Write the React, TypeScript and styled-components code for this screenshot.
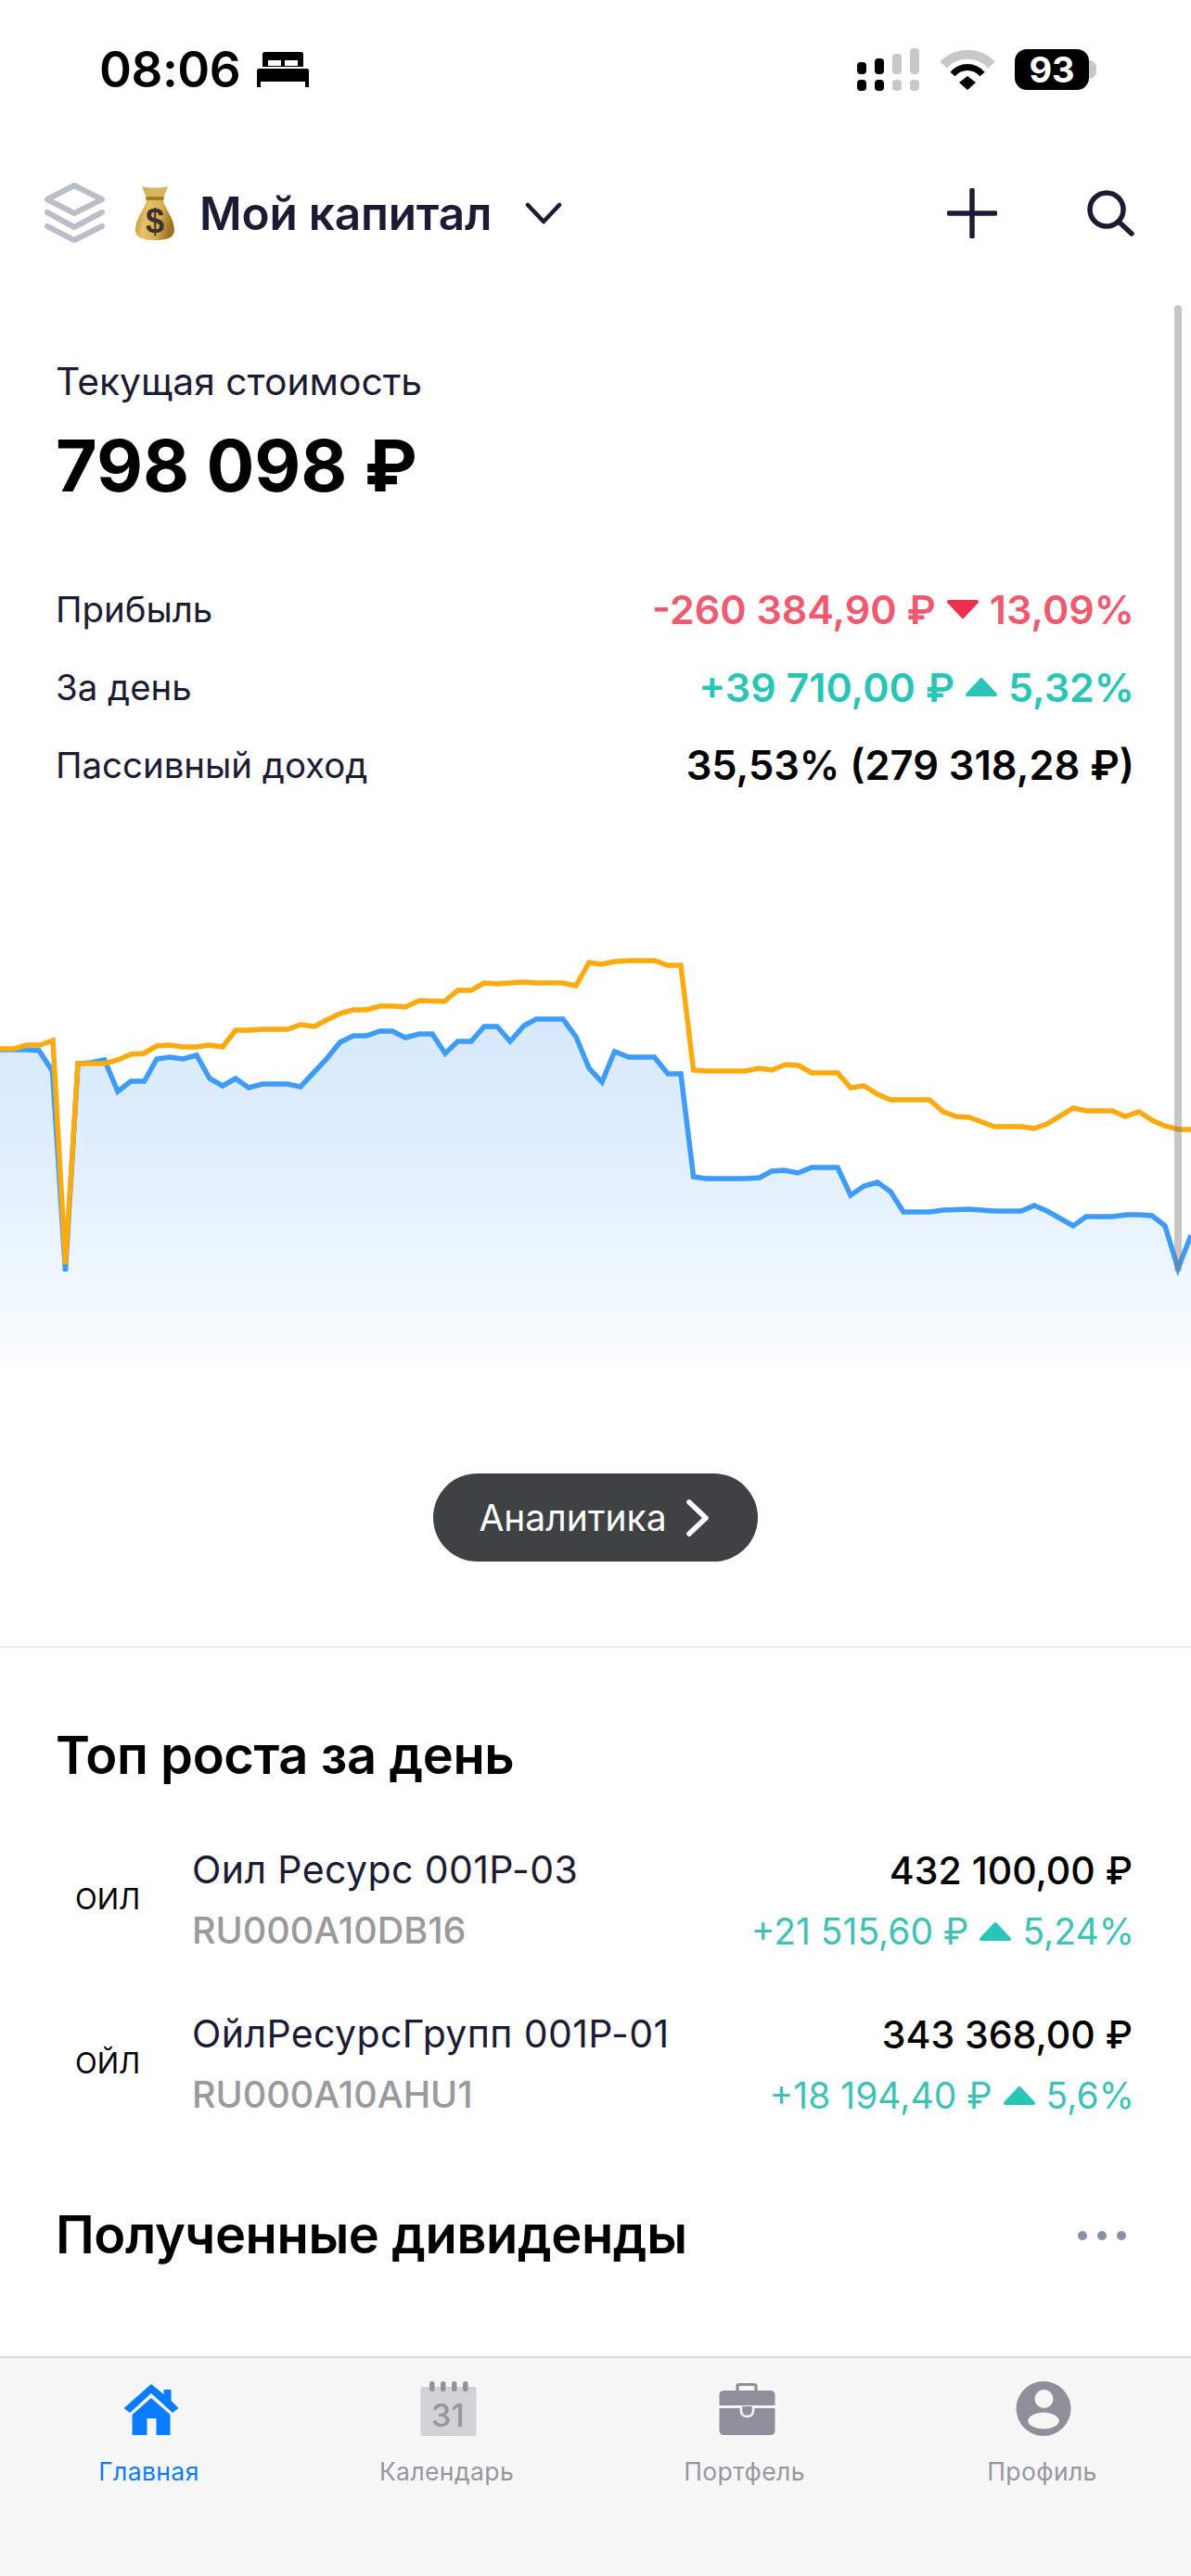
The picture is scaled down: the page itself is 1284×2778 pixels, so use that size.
import React from 'react'
import styled, { createGlobalStyle } from 'styled-components'

const GlobalStyle = createGlobalStyle`
	html, body {
		margin: 0;
		padding: 0;
		background: #fff;
		overflow: hidden;
	}
	* {
		box-sizing: border-box;
	}
`

const Page = styled.div`
	position: relative;
	width: 1284px;
	height: 2778px;
	display: flex;
	flex-direction: column;
	overflow: hidden;
	background: #fff;
	font-family: Inter, "Noto Sans", sans-serif;
	color: #1b1c33;
`

const StatusBar = styled.div`
	height: 150px;
	flex-shrink: 0;
	display: flex;
	align-items: center;
	justify-content: space-between;
	padding: 0 97px 0 107px;
`

const StatusLeft = styled.div`
	display: flex;
	align-items: center;
	gap: 18px;
`

const StatusRight = styled.div`
	display: flex;
	align-items: center;
	gap: 21px;
`

const Time = styled.div`
	font-size: 53px;
	font-weight: 600;
	line-height: 60px;
	color: #000;
	letter-spacing: -0.5px;
`

const Battery = styled.div`
	position: relative;
	width: 80px;
	height: 44px;
	margin-right: 13px;
	border-radius: 13px;
	background: #000;
	color: #fff;
	font-size: 38px;
	font-weight: 700;
	line-height: 44px;
	text-align: center;

	&::after {
		content: '';
		position: absolute;
		left: 80px;
		top: 12px;
		width: 8px;
		height: 20px;
		border-radius: 0 10px 10px 0;
		background: #c8c8c8;
	}
`

const Header = styled.div`
	height: 160px;
	flex-shrink: 0;
	display: flex;
	align-items: center;
	padding: 0 61px 0 48px;
`

const Title = styled.div`
	margin-left: 26px;
	font-size: 49.5px;
	font-weight: 600;
	line-height: 60px;
	letter-spacing: -0.2px;
`

const HeaderActions = styled.div`
	margin-left: auto;
	display: flex;
	align-items: center;
	gap: 96px;
`

const Summary = styled.div`
	padding: 77px 63px 0 60px;
`

const SummaryLabel = styled.div`
	font-size: 40.8px;
	line-height: 48px;
	font-weight: 400;
`

const SummaryValue = styled.div`
	font-size: 77px;
	line-height: 90px;
	font-weight: 700;
	color: #000;
	margin: 22px 0 68px;
`

const StatRow = styled.div`
	height: 84px;
	display: flex;
	align-items: center;
	justify-content: space-between;
`

const StatLabel = styled.div`
	font-size: 38.4px;
	font-weight: 400;
`

const Change = styled.div<{ $color: string; $size: number; $weight: number }>`
	display: flex;
	align-items: center;
	gap: 10px;
	margin-right: -2px;
	font-size: ${p => p.$size}px;
	font-weight: ${p => p.$weight};
	color: ${p => p.$color};
	white-space: nowrap;
`

const Chart = styled.svg`
	display: block;
	flex-shrink: 0;
	width: 1284px;
	height: 722px;
`

const Scrollbar = styled.div`
	position: absolute;
	left: 1266px;
	top: 329px;
	width: 8px;
	height: 1042px;
	border-radius: 4px 4px 0 0;
	background: rgba(120, 120, 120, 0.42);
`

const AnalyticsButton = styled.button`
	align-self: center;
	flex-shrink: 0;
	width: 350px;
	height: 95px;
	border: 0;
	border-radius: 48px;
	background: #3e4245;
	color: #fff;
	font-family: inherit;
	font-size: 39px;
	font-weight: 400;
	display: flex;
	align-items: center;
	justify-content: center;
	gap: 20px;
	padding: 0 3px 0 0;
`

const Divider = styled.div`
	flex-shrink: 0;
	height: 2px;
	margin-top: 91px;
	background: #ececee;
`

const SectionTitle = styled.div`
	font-size: 56px;
	font-weight: 600;
	color: #000;
	line-height: 70px;
	letter-spacing: -0.4px;
`

const TopSection = styled.div`
	padding: 81px 63px 0 60px;
`

const AssetList = styled.div`
	margin-top: 32px;
`

const AssetRow = styled.div`
	height: 177px;
	display: flex;
	align-items: center;
`

const Ticker = styled.div`
	width: 147px;
	padding-left: 21px;
	margin-top: -2px;
	flex-shrink: 0;
	font-size: 31px;
	line-height: 40px;
	color: #000;
`

const AssetInfo = styled.div`
	display: flex;
	flex-direction: column;
	gap: 26px;
`

const AssetName = styled.div`
	font-size: 41px;
	line-height: 40px;
	letter-spacing: 0.4px;
`

const AssetCode = styled.div`
	font-size: 39.5px;
	line-height: 40px;
	font-weight: 500;
	color: #999a9e;
`

const AssetValues = styled.div`
	margin-left: auto;
	padding-top: 6px;
	display: flex;
	flex-direction: column;
	align-items: flex-end;
	gap: 22px;
`

const AssetPrice = styled.div`
	font-size: 41px;
	line-height: 40px;
	font-weight: 500;
	color: #000;
`

const DividendsHeader = styled.div`
	margin: 58px 70px 0 60px;
	display: flex;
	align-items: center;
	justify-content: space-between;
`

const DividendsTitle = styled(SectionTitle)`
	line-height: 76px;
`

const MoreDots = styled.svg`
	display: block;
	width: 52px;
	height: 12px;
	margin-top: 2px;
`

const TabBar = styled.div`
	margin-top: auto;
	height: 237px;
	flex-shrink: 0;
	display: grid;
	grid-template-columns: repeat(4, 1fr);
	background: #f7f7f8;
	border-top: 2px solid #d9d9dd;
	padding-top: 25px;
`

const Tab = styled.div<{ $active?: boolean }>`
	display: flex;
	flex-direction: column;
	align-items: center;
	gap: 16px;
	font-size: 26.5px;
	line-height: 34px;
	letter-spacing: 0.4px;
	color: ${p => (p.$active ? '#0a7cff' : '#96979c')};
`

const TabIcon = styled.svg`
	display: block;
	width: 64px;
	height: 64px;
	overflow: visible;
`

const orange: [number, number][] = [
	[0, 1131], [15.5, 1131], [28.7, 1127], [43, 1127], [57, 1122], [70.5, 1363], [84, 1147], [112.6, 1147],
	[127, 1143], [141, 1137], [155, 1136], [169, 1128], [183, 1127], [197, 1129], [212, 1129], [225, 1127],
	[240, 1129], [254, 1111], [268, 1111], [283, 1110], [310, 1110], [324, 1105], [339, 1107], [352, 1100],
	[366.5, 1093], [381, 1089], [395, 1089], [409.5, 1085], [424, 1085], [437, 1086], [452, 1079], [479, 1080],
	[493.5, 1068], [508, 1068], [522, 1060], [536, 1061], [564, 1059], [578, 1060], [606, 1060], [621, 1063],
	[635, 1038], [648, 1040], [662.5, 1037], [679, 1036], [705.5, 1036], [720, 1041], [734, 1041], [747.6, 1154],
	[761, 1155], [804, 1155], [818, 1152], [832, 1154], [847, 1148], [861, 1149], [875, 1157], [903, 1157],
	[917, 1173], [931.5, 1171], [946, 1180], [960, 1186], [1002, 1186], [1017, 1199], [1031, 1204], [1045, 1205],
	[1072, 1215], [1101, 1215], [1115, 1217], [1129, 1212], [1157, 1195], [1172, 1198], [1199, 1198], [1213, 1204],
	[1228, 1199], [1242, 1208], [1255, 1214], [1270, 1218], [1284, 1218],
]

const blue: [number, number][] = [
	[0, 1132], [28.7, 1132], [42, 1133], [56.5, 1155], [70.5, 1371], [84, 1147], [98, 1146], [112.6, 1143],
	[127, 1177], [141, 1166], [155.6, 1166], [169, 1142], [183, 1140], [197, 1142], [212, 1138], [226, 1163],
	[240, 1171], [254, 1163], [268, 1173], [283, 1169], [310, 1169], [324, 1172], [352, 1142], [366.5, 1124],
	[381, 1117], [395, 1117], [409.5, 1112], [423, 1112], [437, 1119], [452, 1115], [466, 1115], [480, 1136],
	[493.5, 1123], [508, 1123], [522, 1107], [536, 1107], [550, 1123], [565, 1106], [578, 1099], [607, 1099],
	[621, 1118], [635, 1152], [649, 1167], [662.5, 1134], [678, 1140], [705.5, 1140], [720, 1158], [734, 1158],
	[747.6, 1269], [761, 1271], [804, 1271], [819, 1270], [832, 1263], [845.5, 1262], [860, 1265], [875, 1259],
	[903, 1259], [917, 1289], [931.5, 1279], [946, 1275], [960, 1285], [974, 1307], [1002, 1307], [1017, 1305],
	[1045, 1304], [1072, 1306], [1101, 1306], [1115, 1300], [1129, 1306], [1157, 1322], [1171, 1312], [1199, 1312],
	[1215, 1310], [1228, 1310], [1242, 1311], [1256, 1322], [1270, 1368], [1284, 1332],
]

const toPoints = (pts: [number, number][]) => pts.map(p => p.join(',')).join(' ')

function Triangle({ down, color }: { down?: boolean; color: string }) {
	const d = down ? '4,4 34,4 19,20' : '19,4 34,20 4,20'
	return (
		<svg width="38" height="24" viewBox="0 0 38 24">
			<polygon points={d} fill={color} stroke={color} strokeWidth="4" strokeLinejoin="round" />
		</svg>
	)
}

function MoneyBag() {
	return (
		<svg width="44" height="60" viewBox="0 0 44 60" style={{ marginLeft: 29 }}>
			<defs>
				<linearGradient id="bagBody" x1="0" x2="1" y1="0" y2="0.25">
					<stop offset="0" stopColor="#a9802c" />
					<stop offset="0.35" stopColor="#e6c269" />
					<stop offset="0.7" stopColor="#d7ad50" />
					<stop offset="1" stopColor="#9c7424" />
				</linearGradient>
			</defs>
			<path d="M8 1 C16 3 28 3 36 1 L31 14 L13 14 Z" fill="#d9b45f" />
			<path d="M13 14 C14 22 1 34 1 48 C1 56 8 59 22 59 C36 59 43 56 43 48 C43 34 30 22 31 14 Z" fill="url(#bagBody)" />
			<rect x="12" y="12" width="20" height="4" rx="2" fill="#a57b2a" />
			<text x="22" y="51" textAnchor="middle" fontFamily="Liberation Sans" fontSize="36" fontWeight="700" fill="#3b3230">$</text>
		</svg>
	)
}

export default function App() {
	const area = `0,1540 ${toPoints(blue)} 1284,1540`

	return (
		<Page>
			<GlobalStyle />
			<StatusBar>
				<StatusLeft>
					<Time>08:06</Time>
					<svg width="56" height="38" viewBox="0 0 56 38">
						<path d="M6 2 Q6 0 9 0 L47 0 Q50 0 50 2 L50 16 L6 16 Z M12 9 L12 15 L26 15 L26 9 Z M30 9 L30 15 L44 15 L44 9 Z" fill="#000" fillRule="evenodd" />
						<path d="M2 18 L54 18 Q56 18 56 20 L56 38 L52 38 L52 32 L4 32 L4 38 L0 38 L0 20 Q0 18 2 18 Z" fill="#000" />
					</svg>
				</StatusLeft>
				<StatusRight>
					<svg width="68" height="46" viewBox="0 0 68 46">
						<rect x="0" y="15" width="10" height="13" rx="4" fill="#000" />
						<rect x="19" y="11" width="10" height="17" rx="4" fill="#000" />
						<rect x="38" y="6" width="10" height="22" rx="4" fill="#c8c8c8" />
						<rect x="57" y="0" width="10" height="28" rx="4" fill="#c8c8c8" />
						<rect x="0" y="34" width="10" height="12" rx="4" fill="#000" />
						<rect x="19" y="34" width="10" height="12" rx="4" fill="#000" />
						<rect x="38" y="34" width="10" height="12" rx="4" fill="#c8c8c8" />
						<rect x="57" y="34" width="10" height="12" rx="4" fill="#c8c8c8" />
					</svg>
					<svg width="60" height="44" viewBox="0 0 60 44">
						<path d="M4 17 C18 2 42 2 56 17" fill="none" stroke="#c8c8c8" strokeWidth="10" />
						<path d="M14 27 C23 17 37 17 46 27" fill="none" stroke="#000" strokeWidth="7" />
						<path d="M30 29 L39 36 L30 44 L21 36 Z" fill="#000" />
					</svg>
					<Battery>93</Battery>
				</StatusRight>
			</StatusBar>

			<Header>
				<svg width="68" height="66" viewBox="0 0 68 66">
					<path d="M32 3 L62 18 L32 33 L3 18 Z" fill="none" stroke="#b9bec8" strokeWidth="6" strokeLinejoin="round" />
					<path d="M3 32 L32 48 L62 32" fill="none" stroke="#b9bec8" strokeWidth="6" strokeLinecap="round" strokeLinejoin="round" />
					<path d="M3 47 L32 62 L62 47" fill="none" stroke="#b9bec8" strokeWidth="6" strokeLinecap="round" strokeLinejoin="round" />
				</svg>
				<MoneyBag />
				<Title>Мой капитал</Title>
				<svg width="40" height="24" viewBox="0 0 40 24" style={{ marginLeft: 36 }}>
					<path d="M3 3 L20 21 L37 3" fill="none" stroke="#1b1c33" strokeWidth="4.5" strokeLinecap="round" strokeLinejoin="round" />
				</svg>
				<HeaderActions>
					<svg width="54" height="54" viewBox="0 0 54 54">
						<path d="M27 2 V52 M2 27 H52" stroke="#1b1c33" strokeWidth="5.5" strokeLinecap="round" />
					</svg>
					<svg width="52" height="50" viewBox="0 0 52 50">
						<circle cx="22" cy="21" r="18" fill="none" stroke="#1b1c33" strokeWidth="5.5" />
						<path d="M35 34 L49 47" stroke="#1b1c33" strokeWidth="5.5" strokeLinecap="round" />
					</svg>
				</HeaderActions>
			</Header>

			<Summary>
				<SummaryLabel>Текущая стоимость</SummaryLabel>
				<SummaryValue>798 098 ₽</SummaryValue>
				<StatRow>
					<StatLabel>Прибыль</StatLabel>
					<Change $color="#ee5a6f" $size={43} $weight={600}>
						-260 384,90 ₽ <Triangle down color="#ee2f50" /> 13,09%
					</Change>
				</StatRow>
				<StatRow>
					<StatLabel>За день</StatLabel>
					<Change $color="#29c5b6" $size={43} $weight={600}>
						+39 710,00 ₽ <Triangle color="#29c5b6" /> 5,32%
					</Change>
				</StatRow>
				<StatRow>
					<StatLabel>Пассивный доход</StatLabel>
					<Change $color="#000" $size={43.4} $weight={600}>35,53% (279 318,28 ₽)</Change>
				</StatRow>
			</Summary>

			<Chart viewBox="0 867 1284 722">
				<defs>
					<linearGradient id="areaFill" gradientUnits="userSpaceOnUse" x1="0" x2="0" y1="1100" y2="1490">
						<stop offset="0" stopColor="#d6e8fc" />
						<stop offset="0.5" stopColor="#e5f2fe" />
						<stop offset="0.85" stopColor="#f5faff" />
						<stop offset="1" stopColor="#ffffff" />
					</linearGradient>
				</defs>
				<polygon points={area} fill="url(#areaFill)" />
				<polyline points={toPoints(blue)} fill="none" stroke="#3f9cf6" strokeWidth="5.5" strokeLinejoin="miter" />
				<polyline points={toPoints(orange)} fill="none" stroke="#fbaa0f" strokeWidth="5.5" strokeLinejoin="miter" />
			</Chart>
			<Scrollbar />

			<AnalyticsButton>
				Аналитика
				<svg width="26" height="40" viewBox="0 0 26 40">
					<path d="M4 3 L22 20 L4 37" fill="none" stroke="#fff" strokeWidth="5.5" strokeLinecap="round" strokeLinejoin="round" />
				</svg>
			</AnalyticsButton>

			<Divider />

			<TopSection>
				<SectionTitle>Топ роста за день</SectionTitle>
				<AssetList>
					<AssetRow>
						<Ticker>ОИЛ</Ticker>
						<AssetInfo>
							<AssetName>Оил Ресурс 001Р-03</AssetName>
							<AssetCode>RU000A10DB16</AssetCode>
						</AssetInfo>
						<AssetValues>
							<AssetPrice>432 100,00 ₽</AssetPrice>
							<Change $color="#3fc1b6" $size={39} $weight={400}>
								+21 515,60 ₽ <Triangle color="#29c5b6" /> 5,24%
							</Change>
						</AssetValues>
					</AssetRow>
					<AssetRow>
						<Ticker>ОЙЛ</Ticker>
						<AssetInfo>
							<AssetName>ОйлРесурсГрупп 001Р-01</AssetName>
							<AssetCode>RU000A10AHU1</AssetCode>
						</AssetInfo>
						<AssetValues>
							<AssetPrice>343 368,00 ₽</AssetPrice>
							<Change $color="#3fc1b6" $size={39} $weight={400}>
								+18 194,40 ₽ <Triangle color="#29c5b6" /> 5,6%
							</Change>
						</AssetValues>
					</AssetRow>
				</AssetList>
			</TopSection>

			<DividendsHeader>
				<DividendsTitle>Полученные дивиденды</DividendsTitle>
				<MoreDots viewBox="0 0 52 12">
					<circle cx="5" cy="6" r="5" fill="#8a8fa3" />
					<circle cx="26" cy="6" r="5" fill="#8a8fa3" />
					<circle cx="47" cy="6" r="5" fill="#8a8fa3" />
				</MoreDots>
			</DividendsHeader>

			<TabBar>
				<Tab $active>
					<TabIcon viewBox="0 0 64 64">
						<path d="M34 3 L47.5 14 L47.5 9 L55.5 9 L55.5 21 L63.5 29 L57 34 L34 13 L11 34 L4.5 29 Z" fill="#0a7cff" />
						<path d="M34 18 L54.5 36 L54.5 58 L39.5 58 L39.5 40 L29.5 40 L29.5 58 L13.5 58 L13.5 36 Z" fill="#0a7cff" />
					</TabIcon>
					Главная
				</Tab>
				<Tab>
					<TabIcon viewBox="0 0 64 64">
						<rect x="3.5" y="6" width="60" height="53" rx="2.5" fill="#d1d1d6" />
						<rect x="13" y="0" width="5.5" height="11" rx="2.75" fill="#929298" />
						<rect x="25" y="0" width="5.5" height="11" rx="2.75" fill="#929298" />
						<rect x="37" y="0" width="5.5" height="11" rx="2.75" fill="#929298" />
						<rect x="49" y="0" width="5.5" height="11" rx="2.75" fill="#929298" />
						<text x="33" y="49" textAnchor="middle" fontFamily="Inter" fontSize="34" fontWeight="500" fill="#96969c">31</text>
					</TabIcon>
					Календарь
				</Tab>
				<Tab>
					<TabIcon viewBox="0 0 64 64">
						<path d="M24 10 V5 Q24 3.5 26 3.5 H42 Q44 3.5 44 5 V10" fill="none" stroke="#8e8f9a" strokeWidth="3.2" />
						<path d="M10 10 H59 Q64.5 10 64.5 15 V26 H4.5 V15 Q4.5 10 10 10 Z" fill="#8e8f9a" />
						<path d="M4.5 29 H64.5 V53 Q64.5 58 59 58 H10 Q4.5 58 4.5 53 Z" fill="#8e8f9a" />
						<path d="M28 27 V32 C28 40 41 40 41 32 V27" fill="#8e8f9a" stroke="#f7f7f8" strokeWidth="2.6" />
						<circle cx="34.5" cy="32" r="2.4" fill="#8e8f9a" />
					</TabIcon>
					Портфель
				</Tab>
				<Tab>
					<TabIcon viewBox="0 0 64 64">
						<circle cx="33" cy="29.5" r="29.5" fill="#8e8f9a" />
						<circle cx="33.5" cy="19" r="10" fill="#f7f7f8" />
						<ellipse cx="33" cy="42.5" rx="16.7" ry="9" fill="#f7f7f8" />
					</TabIcon>
					Профиль
				</Tab>
			</TabBar>
		</Page>
	)
}
